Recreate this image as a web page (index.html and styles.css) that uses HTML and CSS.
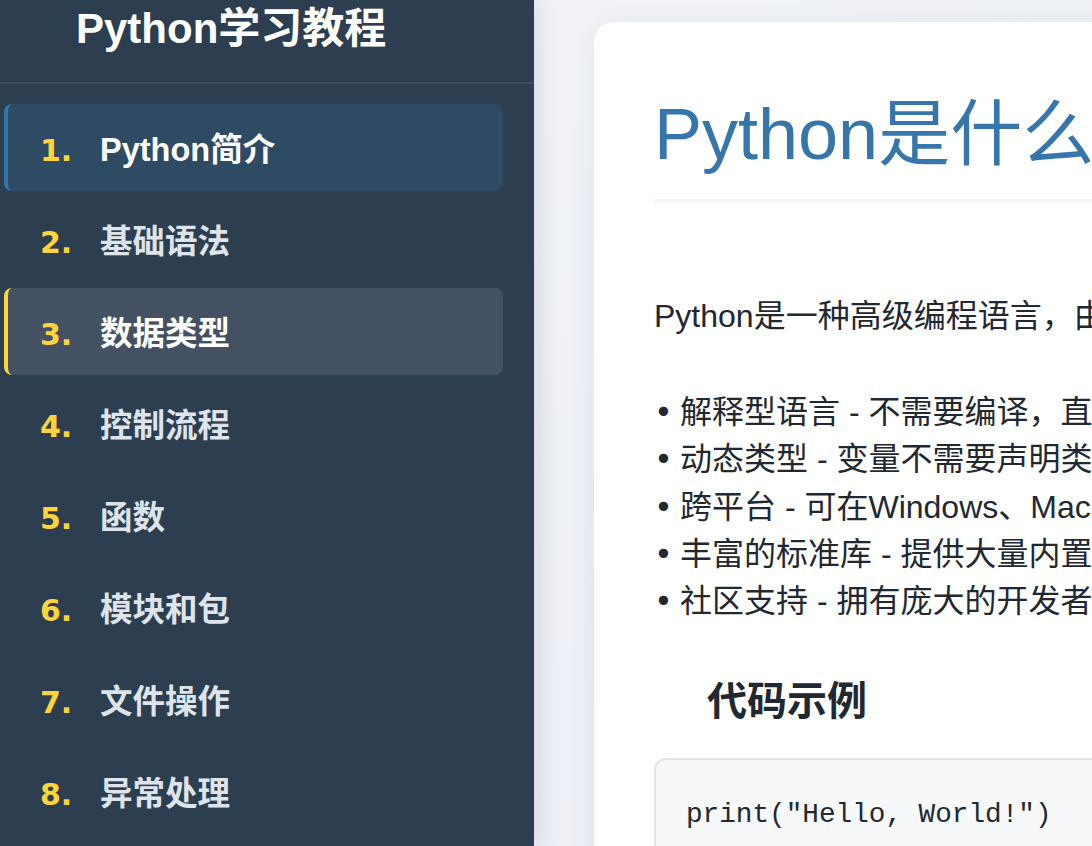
FILE: index.html
```html
<!DOCTYPE html>
<html lang="zh-CN">
<head>
<meta charset="utf-8">
<title>Python学习教程</title>
<link rel="stylesheet" href="styles.css">
</head>
<body>
<div class="layout">
  <aside class="sidebar">
    <div class="brand">Python学习教程</div>
    <nav class="nav">
      <a class="nav-item active"><span class="num">1.</span><span class="label">Python简介</span></a>
      <a class="nav-item"><span class="num">2.</span><span class="label">基础语法</span></a>
      <a class="nav-item hover"><span class="num">3.</span><span class="label">数据类型</span></a>
      <a class="nav-item"><span class="num">4.</span><span class="label">控制流程</span></a>
      <a class="nav-item"><span class="num">5.</span><span class="label">函数</span></a>
      <a class="nav-item"><span class="num">6.</span><span class="label">模块和包</span></a>
      <a class="nav-item"><span class="num">7.</span><span class="label">文件操作</span></a>
      <a class="nav-item"><span class="num">8.</span><span class="label">异常处理</span></a>
    </nav>
  </aside>
  <main class="main">
    <article class="card">
      <h1 class="title">Python是什么？</h1>
      <p class="intro">Python是一种高级编程语言，由Guido van Rossum于1991年创建。它以简洁易读的语法著称。</p>
      <ul class="features">
        <li><span class="dot">•</span>解释型语言 - 不需要编译，直接运行</li>
        <li><span class="dot">•</span>动态类型 - 变量不需要声明类型</li>
        <li><span class="dot">•</span>跨平台 - 可在Windows、Mac和Linux上运行</li>
        <li><span class="dot">•</span>丰富的标准库 - 提供大量内置模块</li>
        <li><span class="dot">•</span>社区支持 - 拥有庞大的开发者社区</li>
      </ul>
      <h2 class="sub">代码示例</h2>
      <pre class="code">print("Hello, World!")</pre>
    </article>
  </main>
</div>
</body>
</html>
```
FILE: styles.css
```css
html, body {
  margin: 0;
  padding: 0;
  height: 100%;
  overflow: hidden;
}
body {
  font-family: "Liberation Sans", "Noto Sans CJK SC", sans-serif;
  background: #e9edf4;
}
.layout {
  display: flex;
  height: 846px;
  width: 1600px;
}
.sidebar {
  flex: 0 0 534px;
  background: #2c3e50;
  box-shadow: 4px 0 24px rgba(20, 30, 50, 0.12);
  position: relative;
  z-index: 1;
}
.brand {
  color: #ffffff;
  font-size: 42px;
  font-weight: 700;
  line-height: 58px;
  padding-left: 76px;
  height: 84px;
  box-sizing: border-box;
  border-bottom: 2px solid #3d4f61;
}
.nav {
  display: flex;
  flex-direction: column;
  gap: 5px;
  padding: 20px 31px 0 4px;
}
.nav-item {
  display: block;
  height: 87px;
  padding-top: 6px;
  line-height: 81px;
  box-sizing: border-box;
  padding-left: 32px;
  border-left: 4px solid transparent;
  border-radius: 8px;
  color: #dfe4ea;
  font-size: 32.5px;
  font-weight: 700;
  white-space: nowrap;
}
.nav-item.active {
  background: #2f4a63;
  border-left-color: #3776ab;
  color: #ffffff;
}
.nav-item.hover {
  background: #435163;
  border-left-color: #ffd43b;
  color: #ffffff;
}
.num {
  display: inline-block;
  font-family: "DejaVu Sans", sans-serif;
  font-size: 30px;
  color: #ffd43b;
  width: 60px;
}
.main {
  flex: 1;
  padding: 22px 0 0 60px;
  background: linear-gradient(135deg, #f1f3f8 0%, #e6eaf2 100%);
}
.card {
  background: #ffffff;
  border-radius: 20px;
  box-shadow: 0 6px 30px rgba(30, 50, 90, 0.08);
  padding: 62px 60px 40px 60px;
  height: 1000px;
}
.title {
  margin: 0;
  color: #3776ab;
  font-size: 72px;
  font-weight: 400;
  line-height: 100px;
  padding-bottom: 15px;
  border-bottom: 3px solid #f3f5f8;
  white-space: nowrap;
}
.intro {
  margin: 91px 0 0 0;
  font-size: 32px;
  line-height: 47px;
  color: #222831;
  white-space: nowrap;
}
.features {
  list-style: none;
  margin: 49px 0 0 0;
  padding: 0;
  font-size: 32px;
  line-height: 47.25px;
  color: #222831;
  white-space: nowrap;
}
.dot {
  display: inline-block;
  width: 26px;
  font-family: "DejaVu Sans", sans-serif;
}
.sub {
  margin: 46px 0 0 53px;
  font-size: 40px;
  font-weight: 700;
  line-height: 60px;
  color: #222831;
}
.code {
  margin: 27px 0 0 0;
  background: #f7f8fa;
  border: 2px solid #e1e4e8;
  border-radius: 12px;
  padding: 39px 30px;
  font-family: "Courier New", "Nimbus Mono PS", "FreeMono", "Liberation Mono", monospace;
  font-size: 27.7px;
  color: #222831;
}
```
